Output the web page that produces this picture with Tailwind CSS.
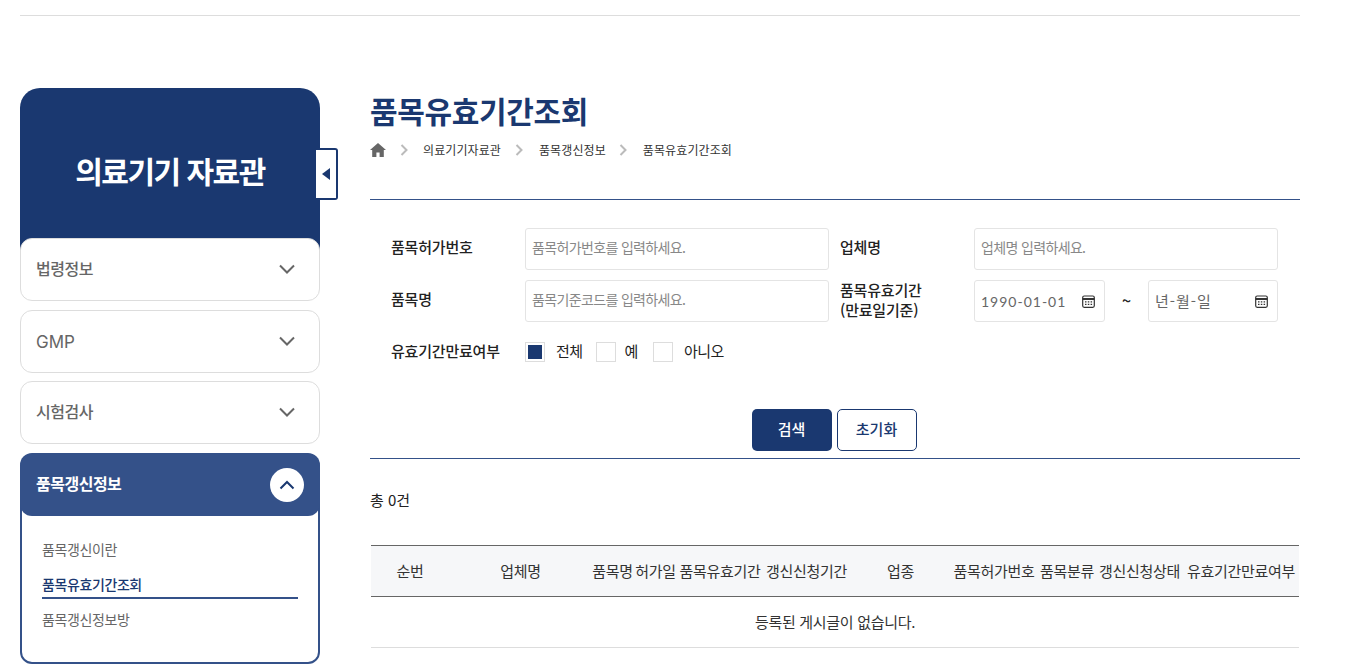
<!DOCTYPE html>
<html lang="ko">
<head>
    <meta charset="UTF-8">
    <title>품목유효기간조회</title>
    <script src="https://cdn.jsdelivr.net/npm/@tailwindcss/browser@4"></script>
</head>
<body class="bg-white h-[664px] overflow-hidden font-['Noto_Sans_CJK_KR','Noto_Sans',sans-serif] text-[#222]">
    <div class="mx-5 w-[1280px]">
        <!-- 상단 선 -->
        <div class="h-[16px] border-b border-[#ddd]"></div>

        <div class="flex mt-[72px]">
            <!-- 사이드바 -->
            <aside class="relative w-[300px] shrink-0">
                <div class="h-[162px] bg-[#1a3870] rounded-t-[20px] text-white text-center text-[30px] font-bold tracking-[-1.5px] leading-[40px] pt-[62px]">의료기기 자료관</div>
                <button class="absolute left-[296px] top-[60px] w-[22px] h-[52px] bg-white border-2 border-l-0 border-[#1a3870] rounded-r-[3px] flex items-center justify-center">
                    <svg width="8" height="12" viewBox="0 0 8 12"><path d="M8 0v12L0 6z" fill="#1a3870"/></svg>
                </button>

                <div class="relative -mt-[12px] flex flex-col">
                    <div class="h-[63px] bg-white border border-[#ddd] rounded-[12px] flex items-center justify-between pl-[15px] pr-[23px] text-[16px] font-medium text-[#666] tracking-[-0.5px]">
                        <span class="pb-[3px]">법령정보</span>
                        <svg width="18" height="11" viewBox="0 0 18 11" fill="none" stroke="#666" stroke-width="2"><path d="M2 1.500l7 7 7-7"/></svg>
                    </div>
                    <div class="mt-[9px] h-[63px] bg-white border border-[#ddd] rounded-[12px] flex items-center justify-between pl-[15px] pr-[23px] text-[17px] font-medium text-[#666] tracking-[-0.5px]">
                        <span class="pt-[2px] font-['Inter',sans-serif] font-normal tracking-normal">GMP</span>
                        <svg width="18" height="11" viewBox="0 0 18 11" fill="none" stroke="#666" stroke-width="2"><path d="M2 1.500l7 7 7-7"/></svg>
                    </div>
                    <div class="mt-[8px] h-[63px] bg-white border border-[#ddd] rounded-[12px] flex items-center justify-between pl-[15px] pr-[23px] text-[16px] font-medium text-[#666] tracking-[-0.5px]">
                        <span class="pb-[3px]">시험검사</span>
                        <svg width="18" height="11" viewBox="0 0 18 11" fill="none" stroke="#666" stroke-width="2"><path d="M2 1.500l7 7 7-7"/></svg>
                    </div>
                    <div class="mt-[9px]">
                        <div class="relative h-[63px] bg-[#345189] rounded-[12px] flex items-center justify-between pl-[16px] pr-[16px] text-[16px] font-bold text-white tracking-[-0.5px]">
                            <span class="pb-[3px]">품목갱신정보</span>
                            <span class="w-[34px] h-[34px] rounded-full bg-white flex items-center justify-center">
                                <svg width="16" height="10" viewBox="0 0 16 10" fill="none" stroke="#1a3870" stroke-width="2"><path d="M1.500 8.500L8 2l6.500 6.500"/></svg>
                            </span>
                        </div>
                        <div class="-mt-[12px] h-[160px] border-2 border-[#345189] rounded-b-[12px] pt-[30px] px-[20px] text-[14px] text-[#666] tracking-[-0.4px]">
                            <div class="h-[35px] leading-[26px]">품목갱신이란</div>
                            <div class="h-[28px] leading-[26px] border-b-2 border-[#345189] text-[#1a3870] font-medium">품목유효기간조회</div>
                            <div class="h-[35px] leading-[40px]">품목갱신정보방</div>
                        </div>
                    </div>
                </div>
            </aside>

            <!-- 본문 -->
            <main class="ml-[50px] flex-1">
                <h1 class="h-[48px] text-[30px] font-bold text-[#1a3870] tracking-[-0.35px] leading-[44px]">품목유효기간조회</h1>
                <div class="flex items-center h-[28px] text-[12px] text-[#333] tracking-[0.1px]">
                    <svg width="16" height="14" viewBox="0 0 16 14" fill="#666"><path d="M8 0L0 7h2.200v7h4.200V9.500h3.200V14h4.200V7H16z"/></svg>
                    <svg class="ml-[14px]" width="8" height="12" viewBox="0 0 8 12" fill="none" stroke="#bbb" stroke-width="2"><path d="M1.500 1l5 5-5 5"/></svg>
                    <span class="ml-[15px] pb-[1px]">의료기기자료관</span>
                    <svg class="ml-[14px]" width="8" height="12" viewBox="0 0 8 12" fill="none" stroke="#bbb" stroke-width="2"><path d="M1.500 1l5 5-5 5"/></svg>
                    <span class="ml-[16px] pb-[1px]">품목갱신정보</span>
                    <svg class="ml-[13px]" width="8" height="12" viewBox="0 0 8 12" fill="none" stroke="#bbb" stroke-width="2"><path d="M1.500 1l5 5-5 5"/></svg>
                    <span class="ml-[16px] pb-[1px]">품목유효기간조회</span>
                </div>
                <div class="mt-[35px] border-b border-[#345189]"></div>

                <!-- 검색 폼 -->
                <form class="pl-[21px] pt-[28px] flex flex-col text-[15px] font-medium tracking-[-0.2px]">
                    <div class="flex h-[42px] items-center">
                        <label class="w-[134px] pb-[3px]">품목허가번호</label>
                        <input class="w-[304px] h-[42px] border border-[#e4e4e4] rounded-[3px] px-[6px] pb-[4px] text-[14px] font-normal tracking-[-0.65px] placeholder:text-[#888]" placeholder="품목허가번호를 입력하세요.">
                        <label class="ml-[11px] w-[134px] pb-[3px]">업체명</label>
                        <input class="w-[304px] h-[42px] border border-[#e4e4e4] rounded-[3px] px-[6px] pb-[4px] text-[14px] font-normal tracking-[-0.65px] placeholder:text-[#888]" placeholder="업체명 입력하세요.">
                    </div>
                    <div class="flex h-[42px] items-center mt-[10px]">
                        <label class="w-[134px] pb-[3px]">품목명</label>
                        <input class="w-[304px] h-[42px] border border-[#e4e4e4] rounded-[3px] px-[6px] pb-[4px] text-[14px] font-normal tracking-[-0.65px] placeholder:text-[#888]" placeholder="품목기준코드를 입력하세요.">
                        <label class="ml-[11px] w-[134px] leading-[20px] pb-[3px]">품목유효기간<br>(만료일기준)</label>
                        <div class="w-[131px] h-[42px] border border-[#e4e4e4] rounded-[3px] pl-[6px] pr-[9px] flex items-center justify-between text-[14px] font-normal text-[#666] tracking-[1px] font-['Lato','Noto_Sans_CJK_KR',sans-serif]">
                            <span>1990-01-01</span>
                            <svg width="13" height="13" viewBox="0 0 13 13" fill="none" stroke="#333" stroke-width="1.200"><rect x="0.700" y="1" width="11.600" height="11.300" rx="1.500"/><path d="M0.700 4h11.600" stroke-width="2"/><path d="M3 6.800h1.500M5.800 6.800h1.500M8.600 6.800h1.500M3 9.300h1.500M5.800 9.300h1.500M8.600 9.300h1.500"/></svg>
                        </div>
                        <span class="w-[43px] text-center text-[16px] font-medium pb-[2px]">~</span>
                        <div class="w-[130px] h-[42px] border border-[#e4e4e4] rounded-[3px] pl-[6px] pr-[9px] flex items-center justify-between text-[15px] font-normal text-[#666] tracking-[1px]">
                            <span>년-월-일</span>
                            <svg width="13" height="13" viewBox="0 0 13 13" fill="none" stroke="#333" stroke-width="1.200"><rect x="0.700" y="1" width="11.600" height="11.300" rx="1.500"/><path d="M0.700 4h11.600" stroke-width="2"/><path d="M3 6.800h1.500M5.800 6.800h1.500M8.600 6.800h1.500M3 9.300h1.500M5.800 9.300h1.500M8.600 9.300h1.500"/></svg>
                        </div>
                    </div>
                    <div class="flex items-center h-[20px] mt-[20px]">
                        <label class="w-[134px] pb-[2px]">유효기간만료여부</label>
                        <span class="w-[20px] h-[20px] border border-[#ddd] p-[2px]"><span class="block w-full h-full bg-[#1a3870]"></span></span>
                        <span class="ml-[11px] font-normal pb-[2px] tracking-[-0.5px]">전체</span>
                        <span class="ml-[13px] w-[20px] h-[20px] border border-[#ddd]"></span>
                        <span class="ml-[9px] font-normal pb-[2px] tracking-[-0.5px]">예</span>
                        <span class="ml-[15px] w-[20px] h-[20px] border border-[#ddd]"></span>
                        <span class="ml-[11px] font-normal pb-[2px] tracking-[-0.5px]">아니오</span>
                    </div>
                </form>

                <div class="mt-[47px] flex justify-center gap-[5px] text-[15px] font-medium pr-[2px]">
                    <button class="w-[80px] h-[42px] pb-[2px] rounded-[5px] bg-[#1a3870] text-white">검색</button>
                    <button class="w-[80px] h-[42px] pb-[2px] rounded-[5px] border border-[#1a3870] text-[#1a3870]">초기화</button>
                </div>
                <div class="mt-[7px] border-b border-[#345189]"></div>

                <p class="mt-[31px] text-[15px] leading-[20px] text-[#222]">총 0건</p>

                <!-- 목록 -->
                <table class="mt-[35px] ml-[1px] w-[928px] table-fixed text-[15px] text-center tracking-[-0.3px] text-[#333]">
                    <colgroup>
                        <col class="w-[78px]"><col class="w-[143px]"><col class="w-[41px]"><col class="w-[45px]"><col class="w-[84px]"><col class="w-[89px]"><col class="w-[99px]"><col class="w-[88px]"><col class="w-[58px]"><col class="w-[87px]"><col class="w-[116px]">
                    </colgroup>
                    <thead>
                        <tr class="h-[51px] bg-[#f6f7f9] border-y border-[#666]">
                            <th class="font-normal whitespace-nowrap">순번</th>
                            <th class="font-normal whitespace-nowrap">업체명</th>
                            <th class="font-normal whitespace-nowrap">품목명</th>
                            <th class="font-normal whitespace-nowrap">허가일</th>
                            <th class="font-normal whitespace-nowrap">품목유효기간</th>
                            <th class="font-normal whitespace-nowrap">갱신신청기간</th>
                            <th class="font-normal whitespace-nowrap">업종</th>
                            <th class="font-normal whitespace-nowrap">품목허가번호</th>
                            <th class="font-normal whitespace-nowrap">품목분류</th>
                            <th class="font-normal whitespace-nowrap">갱신신청상태</th>
                            <th class="font-normal whitespace-nowrap">유효기간만료여부</th>
                        </tr>
                    </thead>
                    <tbody>
                        <tr class="h-[51px] border-b border-[#ddd]">
                            <td colspan="11">등록된 게시글이 없습니다.</td>
                        </tr>
                    </tbody>
                </table>
            </main>
        </div>
    </div>
</body>
</html>
